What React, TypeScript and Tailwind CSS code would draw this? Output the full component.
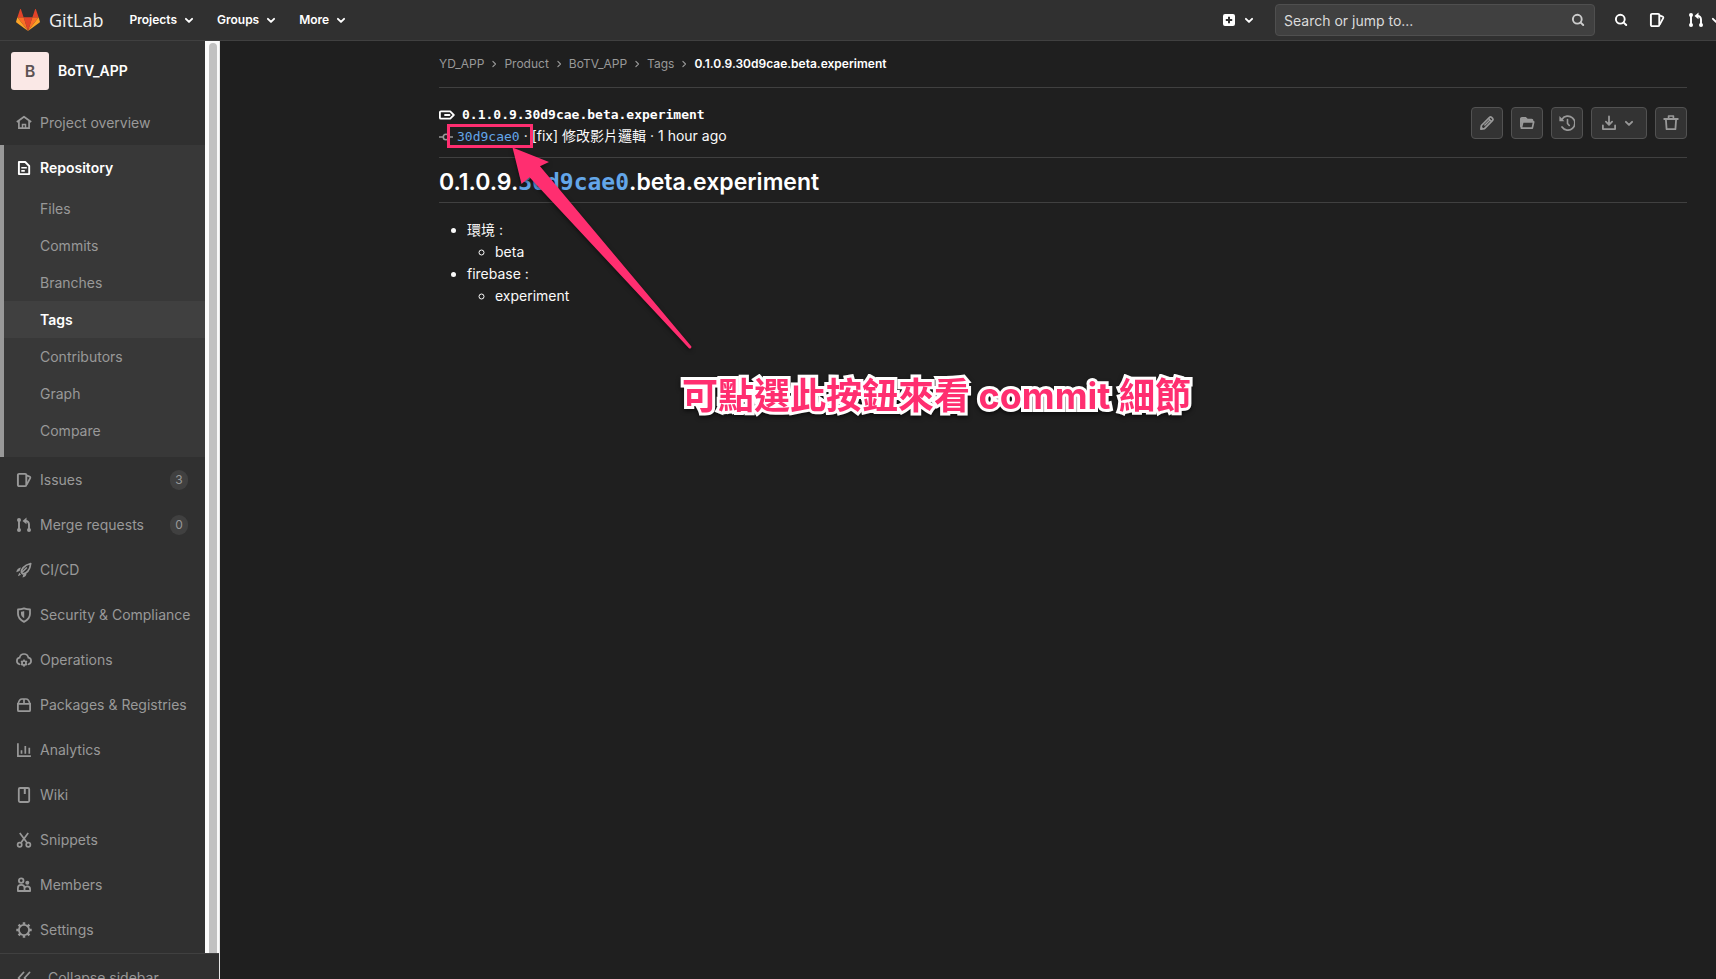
import type { ReactNode } from 'react';

type IconProps = { name: IconName; className?: string };

const line = (d: string, width = 1.5) => (
  <path d={d} fill="none" stroke="currentColor" strokeWidth={width} strokeLinejoin="round" strokeLinecap="round" />
);

const icons = {
  home: (
    <>
      <path d="M.8 7 8 1.7 15.200 7" fill="none" stroke="currentColor" strokeWidth="1.700" strokeLinejoin="round" />
      <path d="M2.900 6v7.200h10.200V6" fill="none" stroke="currentColor" strokeWidth="1.700" />
      <path d="M6.500 13V9.500h3V13" fill="none" stroke="currentColor" strokeWidth="1.500" />
    </>
  ),
  doc: (
    <>
      <path d="M2.900 2h6.300l4 4v8.100H2.900z" fill="none" stroke="currentColor" strokeWidth="1.900" strokeLinejoin="round" />
      <path d="M5.300 7.800h5.500M5.300 10.900h3.500" stroke="currentColor" strokeWidth="1.600" />
    </>
  ),
  issues: (
    <>
      <rect x="1.900" y="1.900" width="8.400" height="12.200" rx="1.200" fill="none" stroke="currentColor" strokeWidth="1.900" />
      <path d="M10.500 3.300 13.600 4.600c.7.300.9.900.6 1.500l-3.500 6.500" fill="none" stroke="currentColor" strokeWidth="1.800" />
    </>
  ),
  merge: (
    <>
      <circle cx="3" cy="3" r="2" fill="currentColor" />
      <circle cx="3" cy="13" r="2" fill="currentColor" />
      <circle cx="13" cy="13" r="2" fill="currentColor" />
      <path d="M3 3v10M13 13V7.500C13 5.200 11.800 4 9.500 4H8" fill="none" stroke="currentColor" strokeWidth="1.900" />
      <path d="M10.500.6v6.600L6.500 3.900z" fill="currentColor" />
    </>
  ),
  rocket: (
    <>
      <path d="M5.400 10.500c-.4-2.700 2.100-7.300 9.300-9-.6 7.300-4.700 10.300-7.800 10.300z" fill="none" stroke="currentColor" strokeWidth="1.700" strokeLinejoin="round" />
      <path d="M6 10.300 10.800 5.400" stroke="currentColor" strokeWidth="1.500" />
      <path d="M5 5.600C2.400 5.700.5 7.800.3 10.200L3.500 9zM10.500 11.500c0 2.200-1.700 3.800-4 4l.9-3.200zM3.300 10.800l1.700 1.900-3.100 1.600z" fill="currentColor" />
    </>
  ),
  shield: (
    <>
      <path d="M8 1.300c1.700.7 3.700 1.100 6 1.200v4.300c0 3.600-2.100 6.100-6 8.100-3.900-2-6-4.500-6-8.100V2.500c2.300-.1 4.300-.5 6-1.200z" fill="none" stroke="currentColor" strokeWidth="1.800" strokeLinejoin="round" />
      <path d="M8.200 4v7.200C6 9.900 5 8.500 5 7V4.700C6.300 4.600 7.300 4.400 8.200 4z" fill="currentColor" />
    </>
  ),
  cloud: (
    <>
      <path d="M3.500 12.300C1.900 11.800.9 10.600.9 9c0-1.700 1.100-3 2.700-3.300C4.100 3.400 5.800 2 8 2s3.900 1.400 4.400 3.700c1.600.3 2.700 1.600 2.700 3.300 0 1.600-1 2.800-2.600 3.300" fill="none" stroke="currentColor" strokeWidth="1.700" strokeLinecap="round" />
      <circle cx="8" cy="11" r="2" fill="none" stroke="currentColor" strokeWidth="1.700" />
      <path d="M8 7.500v1.500M8 13v1.700M5 9.200l1.300.8M11 9.200l-1.300.8M5 12.800l1.300-.8M11 12.800l-1.300-.8" stroke="currentColor" strokeWidth="1.500" />
    </>
  ),
  package: (
    <>
      <path d="M1.900 6.800h12.200v6.400c0 .6-.4 1-1 1H2.900c-.6 0-1-.4-1-1z" fill="none" stroke="currentColor" strokeWidth="1.800" />
      <path d="M2.200 6.500C3 3.200 4 2 6 2h4c2 0 3 1.200 3.800 4.500M8 2v4.500" fill="none" stroke="currentColor" strokeWidth="1.700" />
    </>
  ),
  chart: (
    <>
      <path d="M1.900 1.300v12.800h13" fill="none" stroke="currentColor" strokeWidth="1.700" />
      <path d="M5.500 8.200v3.500M9.300 4v7.700M13.300 5.700v6" stroke="currentColor" strokeWidth="1.700" />
    </>
  ),
  book: (
    <>
      <rect x="2.800" y="1" width="10.400" height="14" rx="1.200" fill="none" stroke="currentColor" strokeWidth="1.800" />
      <path d="M8.800 2v5" stroke="currentColor" strokeWidth="2" />
    </>
  ),
  scissors: (
    <>
      <circle cx="3.700" cy="12.700" r="2.100" fill="none" stroke="currentColor" strokeWidth="1.700" />
      <circle cx="12.300" cy="12.700" r="2.100" fill="none" stroke="currentColor" strokeWidth="1.700" />
      <path d="M3.800 1 11 10.800M12.200 1 5 10.800" stroke="currentColor" strokeWidth="1.700" />
    </>
  ),
  users: (
    <>
      <circle cx="5.200" cy="3.600" r="2.300" fill="none" stroke="currentColor" strokeWidth="1.800" />
      <circle cx="11.300" cy="5.800" r="2" fill="currentColor" />
      <path d="M1.900 14V11c0-2 1.300-3.200 3.300-3.200S8.500 9 8.500 11v3zM8.500 14h5.600v-2c0-1.700-1.100-2.700-2.800-2.700-1.300 0-2.200.5-2.700 1.500" fill="none" stroke="currentColor" strokeWidth="1.800" strokeLinejoin="round" />
    </>
  ),
  gear: (
    <>
      <circle cx="8" cy="8" r="5.100" fill="none" stroke="currentColor" strokeWidth="1.900" />
      <path d="M8 .3v2.500M8 13.200v2.500M.3 8h2.500M13.200 8h2.500M2.600 2.600l1.700 1.700M11.700 11.700l1.700 1.700M13.400 2.600l-1.700 1.700M4.300 11.700l-1.700 1.700" stroke="currentColor" strokeWidth="2.500" />
    </>
  ),
  collapse: line('M7.500 2.500 2.500 8l5 5.500M13.500 2.500 8.500 8l5 5.500', 1.8),
  chevron: line('M4.900 6.800 8 9.900l3.100-3.100', 1.9),
  search: (
    <>
      <circle cx="7.300" cy="7.200" r="4.400" fill="none" stroke="currentColor" strokeWidth="1.900" />
      {line('M10.700 10.600 13.200 13', 2)}
    </>
  ),
  plus: (
    <path fillRule="evenodd" fill="currentColor" d="M4 2h8a2 2 0 0 1 2 2v8a2 2 0 0 1-2 2H4a2 2 0 0 1-2-2V4a2 2 0 0 1 2-2zm3 2.800V7H4.800v2H7v2.200h2V9h2.200V7H9V4.800z" />
  ),
  tag: (
    <>
      <path d="M1.900 4.300h9.300L14.800 8l-3.600 3.700H1.900c-.6 0-1-.4-1-1V5.300c0-.6.400-1 1-1z" fill="none" stroke="currentColor" strokeWidth="1.800" strokeLinejoin="round" />
      <path d="M6 8h4.500" stroke="currentColor" strokeWidth="1.900" strokeLinecap="round" />
    </>
  ),
  commit: (
    <>
      <circle cx="8" cy="8" r="3.100" fill="none" stroke="currentColor" strokeWidth="1.800" />
      <path d="M0 8h4.500M11.500 8H16" stroke="currentColor" strokeWidth="1.700" />
    </>
  ),
  pencil: (
    <>
      <path d="M1.900 14.100l.5-3.600 7.900-7.900c.6-.6 1.300-1 2-.4l1.500 1.500c.6.700.2 1.400-.4 2l-7.900 7.900z" fill="none" stroke="currentColor" strokeWidth="1.700" strokeLinejoin="round" />
      <path d="M5.400 10.600 10.700 5.300M9.600 3.500l2.900 2.900" stroke="currentColor" strokeWidth="1.400" />
      <path d="M1.500 14.500 2 11l3 3z" fill="currentColor" />
    </>
  ),
  folder: (
    <>
      <path d="M1.900 12.300V3.900c0-.6.4-1 1-1h3.600l1.800 1.800h4.300c.6 0 1 .4 1 1v.8" fill="none" stroke="currentColor" strokeWidth="1.700" />
      <path d="M1.200 3.200h5.600L8.300 4.600h5.200V7H3L1.700 11z" fill="currentColor" />
      <path d="M3.800 6.900h10.900l-1.400 6.200H2.300z" fill="none" stroke="currentColor" strokeWidth="1.700" strokeLinejoin="round" />
    </>
  ),
  history: (
    <>
      <path d="M3 4.300A7 7 0 1 1 3 12" fill="none" stroke="currentColor" strokeWidth="1.700" strokeLinecap="round" />
      <path d="M.4 1v5.300h5z" fill="currentColor" />
      {line('M8.500 4.500v4l1.800 2', 1.6)}
    </>
  ),
  download: (
    <>
      {line('M1.900 10.500v3.600h12.200v-3.600', 1.8)}
      {line('M8 1.500v8M4.900 6.700 8 9.800l3.100-3.100', 1.8)}
    </>
  ),
  trash: (
    <>
      <path d="M2.900 4.500l.7 9.700h8.800l.7-9.700" fill="none" stroke="currentColor" strokeWidth="1.800" strokeLinejoin="round" />
      <path d="M1.200 4h13.600" stroke="currentColor" strokeWidth="1.800" strokeLinecap="round" />
      <path d="M5.600 3.700V1h4.800v2.700" fill="none" stroke="currentColor" strokeWidth="1.700" strokeLinejoin="round" />
    </>
  ),
  separator: line('M6.500 4.500 10 8l-3.500 3.500', 1.5),
} satisfies Record<string, ReactNode>;

type IconName = keyof typeof icons;

function Icon({ name, className = 'size-4' }: IconProps) {
  return (
    <svg viewBox="0 0 16 16" className={`shrink-0 ${className}`} aria-hidden="true">
      {icons[name]}
    </svg>
  );
}

function Logo() {
  return (
    <svg viewBox="0 0 24 22" className="h-[22px] w-6" aria-hidden="true">
      <path d="M12 22 7.600 8.300h8.800z" fill="#e24329" />
      <path d="M12 22 7.600 8.300H1.400z" fill="#fc6d26" />
      <path d="M1.400 8.300.1 12.500c-.1.400 0 .8.300 1L12 22z" fill="#fca326" />
      <path d="M1.400 8.300h6.200L4.900.3c-.1-.4-.7-.4-.8 0z" fill="#e24329" />
      <path d="M12 22l4.400-13.700h6.200z" fill="#fc6d26" />
      <path d="M22.600 8.300l1.300 4.200c.1.400 0 .8-.3 1L12 22z" fill="#fca326" />
      <path d="M22.600 8.300h-6.200L19.100.3c.1-.4.7-.4.8 0z" fill="#e24329" />
    </svg>
  );
}

function Header() {
  return (
    <header className="flex h-[41px] shrink-0 items-center overflow-hidden border-b border-[#404040] bg-[#303030] pl-4 text-white">
      <a href="#" className="flex items-center gap-[9px]">
        <Logo />
        <span className="font-['Open_Sans'] text-[18px] leading-5 text-[#f2f2f2]">GitLab</span>
      </a>
      <nav className="ml-[26px] flex items-center gap-5 text-xs font-semibold">
        {['Projects', 'Groups', 'More'].map((item) => (
          <button key={item} type="button" className="flex items-center gap-1">
            {item}
            <Icon name="chevron" />
          </button>
        ))}
      </nav>
      <div className="-mr-2 ml-auto flex shrink-0 items-center">
        <button type="button" aria-label="New" className="mr-[18px] flex items-center gap-1">
          <Icon name="plus" />
          <Icon name="chevron" />
        </button>
        <label className="flex h-8 w-80 items-center rounded border border-[#4f4f4f] bg-[#404040] pr-2 pl-2 text-[#dbdbdb]">
          <input
            type="text"
            aria-label="Search or jump to"
            placeholder="Search or jump to..."
            className="min-w-0 flex-1 bg-transparent pt-0.5 text-sm outline-none placeholder:text-[#dbdbdb]"
          />
          <Icon name="search" className="size-4 text-[#cccccc]" />
        </label>
        <button type="button" aria-label="Search" className="ml-[18px]"><Icon name="search" /></button>
        <button type="button" aria-label="Issues" className="ml-5"><Icon name="issues" /></button>
        <button type="button" aria-label="Merge requests" className="ml-[23px] flex items-center gap-1">
          <Icon name="merge" />
          <Icon name="chevron" />
        </button>
      </div>
    </header>
  );
}

type Item = { label: string; icon: IconName; count?: number };

const items: Item[] = [
  { label: 'Issues', icon: 'issues', count: 3 },
  { label: 'Merge requests', icon: 'merge', count: 0 },
  { label: 'CI/CD', icon: 'rocket' },
  { label: 'Security & Compliance', icon: 'shield' },
  { label: 'Operations', icon: 'cloud' },
  { label: 'Packages & Registries', icon: 'package' },
  { label: 'Analytics', icon: 'chart' },
  { label: 'Wiki', icon: 'book' },
  { label: 'Snippets', icon: 'scissors' },
  { label: 'Members', icon: 'users' },
  { label: 'Settings', icon: 'gear' },
];

const subItems = ['Files', 'Commits', 'Branches', 'Tags', 'Contributors', 'Graph', 'Compare'];

function NavItem({ label, icon, count }: Item) {
  return (
    <a href="#" className="flex h-[45px] items-center gap-2 pr-[17px] pl-4">
      <Icon name={icon} />
      <span className="flex-1 whitespace-nowrap">{label}</span>
      {count !== undefined && (
        <span className="flex h-5 min-w-[18px] items-center justify-center rounded-full bg-[#404040] text-xs">{count}</span>
      )}
    </a>
  );
}

function Sidebar() {
  return (
    <aside className="flex w-[220px] shrink-0 flex-col border-r border-[#e6e6e6] bg-[#303030] text-sm text-[#999999]">
      <div className="flex min-h-0 flex-1">
        <nav className="min-w-0 flex-1 overflow-hidden">
          <a href="#" className="flex h-[59px] items-center gap-[9px] pl-[11px] font-semibold text-white">
            <span className="flex size-[38px] items-center justify-center rounded-[3px] bg-[#fae8e6] text-base text-[#5c5353]">B</span>
            BoTV_APP
          </a>
          <NavItem label="Project overview" icon="home" />
          <div className="border-l-4 border-[#999999] bg-[#383838] pb-2">
            <a href="#" className="flex h-[45px] items-center gap-2 pl-3 font-semibold text-white">
              <Icon name="doc" />
              Repository
            </a>
            {subItems.map((item) => (
              <a
                key={item}
                href="#"
                className={`flex h-[37px] items-center pl-9 ${item === 'Tags' ? 'bg-[#404040] font-semibold text-white' : ''}`}
              >
                {item}
              </a>
            ))}
          </div>
          {items.map((item) => (
            <NavItem key={item.label} {...item} />
          ))}
        </nav>
        <div className="flex w-[14px] bg-[#fafafa] pt-0.5 pr-0.5 pl-1">
          <div className="flex-1 rounded-t-full bg-[#c1c1c1]" />
        </div>
      </div>
      <div className="h-[26px] shrink-0 overflow-hidden border-t border-[#404040]">
        <button type="button" className="flex h-12 items-center gap-4 pl-4">
          <Icon name="collapse" />
          Collapse sidebar
        </button>
      </div>
    </aside>
  );
}

const actions: { label: string; icon: IconName; menu?: boolean }[] = [
  { label: 'Edit release notes', icon: 'pencil' },
  { label: 'Browse files', icon: 'folder' },
  { label: 'Browse commits', icon: 'history' },
  { label: 'Download', icon: 'download', menu: true },
  { label: 'Delete tag', icon: 'trash' },
];

function Annotation() {
  return (
    <>
      <svg viewBox="0 0 500 340" className="pointer-events-none absolute top-0 left-0 h-[340px] w-[500px]" aria-hidden="true">
        <g fill="#ff2e70">
          <path
            d="M292.500 106.500 329 121l-9 4.300L471 305a1.500 1.500 0 0 1-2.300 2L309.500 136.300 301.500 143z"
            className="drop-shadow-[0_2px_2px_rgba(0,0,0,0.5)]"
          />
          <rect x="228.500" y="84.500" width="83" height="21" fill="none" stroke="#ff2e70" strokeWidth="3" />
        </g>
      </svg>
      <p className="pointer-events-none absolute top-[330px] left-[462px] font-['Inter','Noto_Sans_CJK_TC',sans-serif] text-[36px] leading-[50px] font-bold whitespace-nowrap text-[#ff2e70] drop-shadow-[0_2px_2px_rgba(0,0,0,0.6)] [-webkit-text-stroke:6px_white] [paint-order:stroke_fill]">
        可點選此按鈕來看 commit 細節
      </p>
    </>
  );
}

export default function App() {
  return (
    <div className="flex h-screen flex-col overflow-hidden bg-[#1f1f1f] font-['Inter','Noto_Sans_CJK_TC',sans-serif] text-sm text-[#fafafa]">
      <Header />
      <div className="flex min-h-0 flex-1">
        <Sidebar />
        <main className="relative min-w-0 flex-1 pr-[29px] pl-[219px]">
          <nav aria-label="Breadcrumb" className="flex h-[47px] items-center border-b border-[#404040] text-xs text-[#999999]">
            {['YD_APP', 'Product', 'BoTV_APP', 'Tags'].map((item) => (
              <span key={item} className="flex items-center">
                <a href="#">{item}</a>
                <Icon name="separator" className="mx-1 size-3" />
              </span>
            ))}
            <a href="#" className="font-semibold text-white">0.1.0.9.30d9cae.beta.experiment</a>
          </nav>
          <div className="flex h-[70px] justify-between border-b border-[#404040]">
            <div className="pt-4">
              <div className="flex items-center gap-[7px] font-['DejaVu_Sans_Mono',monospace] text-[13px] leading-[22px] font-bold text-white">
                <Icon name="tag" />
                0.1.0.9.30d9cae.beta.experiment
              </div>
              <div className="flex items-baseline gap-1 leading-5 whitespace-nowrap">
                <Icon name="commit" className="size-[14px] self-center text-[#999999]" />
                <a href="#" className="font-['DejaVu_Sans_Mono',monospace] text-[13px] text-[#63a6e9]">30d9cae0</a>
                <span>·</span>
                <a href="#">[fix] 修改影片邏輯</a>
                <span>· 1 hour ago</span>
              </div>
            </div>
            <div className="flex gap-2 pt-[19px]">
              {actions.map(({ label, icon, menu }) => (
                <button
                  key={label}
                  type="button"
                  aria-label={label}
                  className={`flex h-8 items-center justify-center gap-1 rounded border border-[#525252] bg-[#333333] text-[#999999] ${menu ? 'w-14' : 'w-8'}`}
                >
                  <Icon name={icon} />
                  {menu && <Icon name="chevron" />}
                </button>
              ))}
            </div>
          </div>
          <h1 className="flex h-[45px] items-baseline border-b border-[#404040] text-[23px] leading-[48px] font-semibold text-white">
            0.1.0.9.
            <a href="#" className="font-['DejaVu_Sans_Mono',monospace] text-[#63a6e9]">30d9cae0</a>
            .beta.experiment
          </h1>
          <ul className="mt-4 list-disc pl-7 leading-[22px]">
            <li>
              環境 :
              <ul className="list-[circle] pl-7">
                <li>beta</li>
              </ul>
            </li>
            <li>
              firebase :
              <ul className="list-[circle] pl-7">
                <li>experiment</li>
              </ul>
            </li>
          </ul>
          <Annotation />
        </main>
      </div>
    </div>
  );
}
